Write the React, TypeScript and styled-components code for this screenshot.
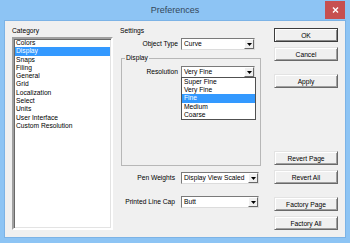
import React from 'react';
import styled, { createGlobalStyle } from 'styled-components';

const GlobalStyle = createGlobalStyle`
  html, body {
    margin: 0;
    padding: 0;
  }
  body {
    font-family: "Liberation Sans", Arial, sans-serif;
    background: #fff;
  }
`;

const categories = [
  'Colors',
  'Display',
  'Snaps',
  'Filing',
  'General',
  'Grid',
  'Localization',
  'Select',
  'Units',
  'User Interface',
  'Custom Resolution',
];

const resolutions = ['Super Fine', 'Very Fine', 'Fine', 'Medium', 'Coarse'];

const Window = styled.div`
  width: 350px;
  height: 243px;
  background: #8dc4f4;
  display: flex;
  flex-direction: column;
  overflow: hidden;
  font-size: 6.7px;
  color: #000;
`;

const TitleBar = styled.div`
  height: 21px;
  display: grid;
  grid-template-columns: 1fr auto 1fr;
  align-items: start;
`;

const Title = styled.div`
  grid-column: 2;
  font-size: 9px;
  line-height: 20px;
  color: #34475a;
`;

const CloseButton = styled.div`
  grid-column: 3;
  justify-self: end;
  margin: 1px 5px 0 0;
  width: 20px;
  height: 18px;
  background: #c75050;
  display: flex;
  align-items: center;
  justify-content: center;
`;

const Client = styled.div`
  flex: 1;
  margin: 0 5px 6px 5px;
  background: #f0f0f0;
  box-shadow: 0 0 0 1px #7cb3e6;
  display: flex;
  padding: 6px 7px 7px 7px;
  box-sizing: border-box;
`;

const LeftCol = styled.div`
  width: 101px;
  display: flex;
  flex-direction: column;
`;

const Caption = styled.div`
  line-height: 8px;
  height: 8px;
  white-space: nowrap;
`;

const ListBox = styled.div`
  flex: 1;
  margin-top: 2px;
  background: #fff;
  border: 2px solid;
  border-color: #a0a0a0 #ffffff #ffffff #a0a0a0;
  box-shadow: inset 1px 1px 0 #696969, inset -1px -1px 0 #e3e3e3;
  padding: 0 1px 0 1px;
  box-sizing: border-box;
`;

const ListItem = styled.div<{ $selected?: boolean }>`
  height: 8.3px;
  line-height: 8.3px;
  padding-left: 1px;
  white-space: nowrap;
  background: ${p => (p.$selected ? '#3399ff' : 'transparent')};
  color: ${p => (p.$selected ? '#fff' : '#000')};
`;

const MidCol = styled.div`
  width: 141px;
  margin-left: 7px;
  display: flex;
  flex-direction: column;
`;

const Row = styled.div<{ $labelW: number; $comboW: number; $gap: number; $top: number }>`
  display: grid;
  grid-template-columns: ${p => p.$labelW}px ${p => p.$comboW}px;
  column-gap: ${p => p.$gap}px;
  align-items: center;
  margin-top: ${p => p.$top}px;
`;

const RowLabel = styled.div`
  text-align: right;
  white-space: nowrap;
  line-height: 8px;
`;

const Combo = styled.div`
  position: relative;
  height: 12px;
  background: #fff;
  border: 1px solid;
  border-color: #7a7a7a #dcdcdc #dcdcdc #7a7a7a;
  box-sizing: border-box;
  display: flex;
  align-items: stretch;
`;

const ComboText = styled.div`
  flex: 1;
  padding-left: 2px;
  line-height: 10px;
  white-space: nowrap;
  overflow: hidden;
`;

const ArrowButton = styled.div`
  width: 10px;
  background: #f0f0f0;
  border: 1px solid;
  border-color: #ffffff #696969 #696969 #ffffff;
  box-sizing: border-box;
  display: flex;
  align-items: center;
  justify-content: center;
`;

const DropList = styled.div`
  position: absolute;
  top: 100%;
  left: -1px;
  width: 75px;
  background: #fff;
  border: 1px solid #505050;
  box-sizing: border-box;
  z-index: 2;
`;

const DropItem = styled.div<{ $selected?: boolean }>`
  height: 8.2px;
  line-height: 8.2px;
  padding-left: 2px;
  white-space: nowrap;
  background: ${p => (p.$selected ? '#3399ff' : 'transparent')};
  color: ${p => (p.$selected ? '#fff' : '#000')};
`;

const Group = styled.fieldset`
  margin: 4px 0 0 1px;
  padding: 0;
  width: 140px;
  box-sizing: border-box;
  border: 1px solid #b7b7b7;
  min-width: 0;
`;

const Legend = styled.legend`
  padding: 0 1px;
  margin-left: 3px;
  line-height: 8px;
  font-size: 6.7px;
`;

const GroupBody = styled.div`
  height: 103px;
  padding-top: 4px;
  box-sizing: border-box;
`;

const RightCol = styled.div`
  width: 64px;
  margin-left: 13px;
  padding-top: 1px;
  display: flex;
  flex-direction: column;
  justify-content: space-between;
`;

const ButtonGroup = styled.div`
  display: flex;
  flex-direction: column;
`;

const Button = styled.div<{ $default?: boolean; $top?: number }>`
  height: 14px;
  margin-top: ${p => p.$top ?? 0}px;
  background: #f0f0f0;
  border: 1px solid;
  border-color: ${p => (p.$default ? '#3c3c3c' : '#e3e3e3 #696969 #696969 #e3e3e3')};
  box-shadow: ${p =>
    p.$default
      ? 'inset 1px 1px 0 #fff, inset -1px -1px 0 #8a8a8a'
      : 'inset 1px 1px 0 #fff, inset -1px -1px 0 #a0a0a0'};
  box-sizing: border-box;
  display: flex;
  align-items: center;
  justify-content: center;
  white-space: nowrap;
`;

const Arrow = () => (
  <svg width="5" height="3" viewBox="0 0 5 3">
    <polygon points="0,0 5,0 2.5,3" fill="#000" />
  </svg>
);

const ComboBox = ({ value, children }: { value: string; children?: React.ReactNode }) => (
  <Combo>
    <ComboText>{value}</ComboText>
    <ArrowButton>
      <Arrow />
    </ArrowButton>
    {children}
  </Combo>
);

const App = () => {
  return (
    <>
      <GlobalStyle />
      <Window>
        <TitleBar>
          <Title>Preferences</Title>
          <CloseButton>
            <svg width="7" height="6" viewBox="0 0 7 6">
              <path d="M1 0.5 L6 5.5 M6 0.5 L1 5.5" stroke="#fff" strokeWidth="1.4" />
            </svg>
          </CloseButton>
        </TitleBar>
        <Client>
          <LeftCol>
            <Caption>Category</Caption>
            <ListBox>
              {categories.map(c => (
                <ListItem key={c} $selected={c === 'Display'}>
                  {c}
                </ListItem>
              ))}
            </ListBox>
          </LeftCol>

          <MidCol>
            <Caption>Settings</Caption>
            <Row $labelW={58} $comboW={74} $gap={3} $top={3}>
              <RowLabel>Object Type</RowLabel>
              <ComboBox value="Curve" />
            </Row>
            <Group>
              <Legend>Display</Legend>
              <GroupBody>
                <Row $labelW={56} $comboW={74} $gap={3} $top={0}>
                  <RowLabel>Resolution</RowLabel>
                  <ComboBox value="Very Fine">
                    <DropList>
                      {resolutions.map(r => (
                        <DropItem key={r} $selected={r === 'Fine'}>
                          {r}
                        </DropItem>
                      ))}
                    </DropList>
                  </ComboBox>
                </Row>
              </GroupBody>
            </Group>
            <Row $labelW={55} $comboW={78} $gap={6} $top={6}>
              <RowLabel>Pen Weights</RowLabel>
              <ComboBox value="Display View Scaled" />
            </Row>
            <Row $labelW={55} $comboW={78} $gap={6} $top={12}>
              <RowLabel>Printed Line Cap</RowLabel>
              <ComboBox value="Butt" />
            </Row>
          </MidCol>

          <RightCol>
            <ButtonGroup>
              <Button $default>OK</Button>
              <Button $top={5}>Cancel</Button>
              <Button $top={13}>Apply</Button>
            </ButtonGroup>
            <ButtonGroup>
              <Button>Revert Page</Button>
              <Button $top={5}>Revert All</Button>
              <Button $top={13}>Factory Page</Button>
              <Button $top={5}>Factory All</Button>
            </ButtonGroup>
          </RightCol>
        </Client>
      </Window>
    </>
  );
};

export default App;
